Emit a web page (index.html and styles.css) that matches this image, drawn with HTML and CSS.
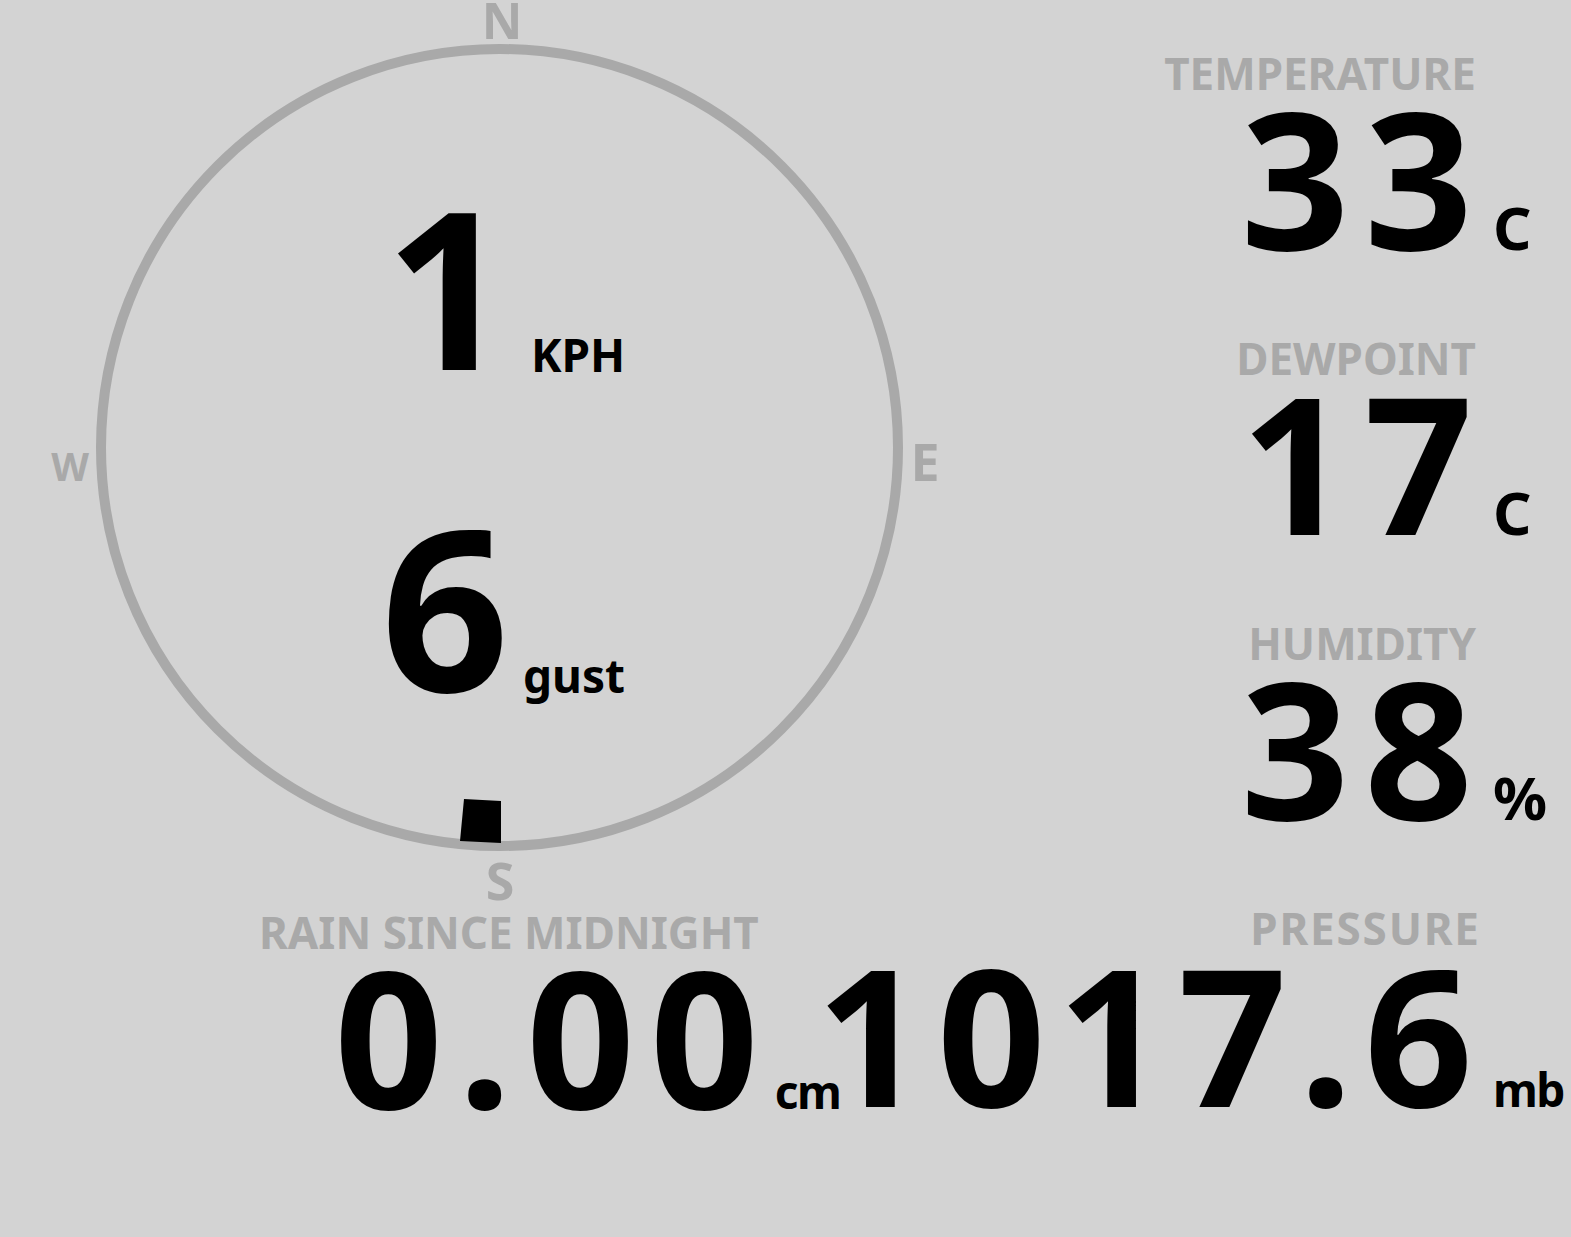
FILE: index.html
```html
<!DOCTYPE html>
<html lang="en">
<head>
<meta charset="utf-8">
<title>Weather</title>
<link rel="stylesheet" href="styles.css">
</head>
<body>
<div class="dash">
  <div class="top">
    <div class="compass">
      <svg class="dial" width="1000" height="905" viewBox="0 0 1000 905">
        <circle class="ring" cx="499.5" cy="447.5" r="398.5"/>
        <text class="cardinal n" x="502" y="39">N</text>
        <text class="cardinal e" x="925" y="481">E</text>
        <text class="cardinal w" x="70" y="481">W</text>
        <text class="cardinal s" x="500" y="900">S</text>
        <polygon class="pointer" points="464,799 501,801 501,843 460,841"/>
        <text class="speed" x="385" y="370">1</text>
        <text class="speed-unit" x="531" y="372">KPH</text>
        <text class="gust" x="381" y="692">6</text>
        <text class="speed-unit" x="523" y="693">gust</text>
      </svg>
    </div>
    <div class="readings">
      <div class="reading">
        <div class="label">TEMPERATURE</div>
        <div class="num">33</div>
        <div class="unit">C</div>
      </div>
      <div class="reading">
        <div class="label">DEWPOINT</div>
        <div class="num">17</div>
        <div class="unit">C</div>
      </div>
      <div class="reading">
        <div class="label">HUMIDITY</div>
        <div class="num">38</div>
        <div class="unit">%</div>
      </div>
    </div>
  </div>
  <div class="bottom">
    <div class="reading rain">
      <div class="label">RAIN SINCE MIDNIGHT</div>
      <div class="num">0.00</div>
      <div class="unit small">cm</div>
    </div>
    <div class="reading pressure">
      <div class="label">PRESSURE</div>
      <div class="num">1017.6</div>
      <div class="unit small">mb</div>
    </div>
  </div>
</div>
</body>
</html>
```
FILE: styles.css
```css
html, body {
  margin: 0;
  padding: 0;
  background: #d3d3d3;
}
body {
  font-family: "Noto Sans", "Open Sans", sans-serif;
  font-weight: 700;
  color: #000;
  width: 1571px;
  height: 1237px;
  overflow: hidden;
}
.dash {
  display: flex;
  flex-direction: column;
}
.top {
  display: flex;
  height: 905px;
}
.compass {
  flex: 0 0 1000px;
}
.dial {
  display: block;
  overflow: visible;
}
.ring {
  fill: none;
  stroke: #a9a9a9;
  stroke-width: 10;
}
.cardinal {
  fill: #a9a9a9;
  font-family: "Noto Sans", sans-serif;
  font-weight: 700;
  text-anchor: middle;
}
.cardinal.n { font-size: 50px; }
.cardinal.e { font-size: 52px; }
.cardinal.w { font-size: 39px; }
.cardinal.s { font-size: 52px; }
.pointer { fill: #000; }
.speed, .gust, .speed-unit {
  font-family: "Noto Sans", sans-serif;
  font-weight: 700;
  fill: #000;
}
.speed { font-size: 220px; }
.gust { font-size: 224px; }
.speed-unit { font-size: 46px; }

.readings {
  flex: 1;
  display: flex;
  flex-direction: column;
  gap: 78px;
  padding-top: 50px;
}
.reading {
  display: grid;
  grid-template-columns: 1fr 78px;
  column-gap: 17px;
  align-items: baseline;
}
.label {
  grid-column: 1;
  font-size: 44px;
  line-height: 46px;
  color: #a9a9a9;
  text-align: right;
  white-space: nowrap;
  margin-bottom: 1px;
}
.num {
  grid-column: 1;
  font-size: 190px;
  line-height: 160px;
  text-align: right;
  letter-spacing: 15px;
  margin-right: -12px;
  white-space: nowrap;
}
.unit {
  grid-column: 2;
  font-size: 60px;
  line-height: 58px;
  white-space: nowrap;
}
.unit.small {
  font-size: 46px;
  line-height: 46px;
  letter-spacing: -1.5px;
}
.bottom {
  display: flex;
}
.rain {
  grid-template-columns: auto 28px;
  column-gap: 16px;
  padding-left: 259px;
  padding-top: 4px;
}
.rain .num {
  margin-right: -15px;
}
.pressure {
  margin-left: auto;
  grid-template-columns: auto 78px;
  column-gap: 14px;
}
.pressure .label {
  letter-spacing: 1.8px;
  margin-right: -1.8px;
}
.pressure .num {
  letter-spacing: 12px;
  margin-right: -6px;
}
```
